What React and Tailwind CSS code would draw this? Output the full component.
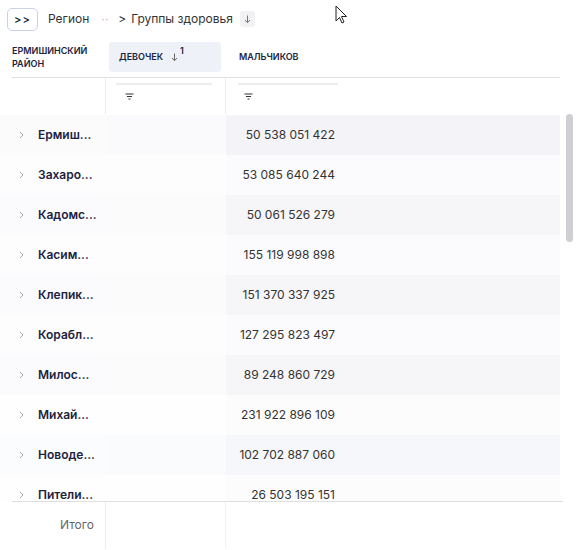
import React from "react";

const rows = [
  ["Ермиш...", "50 538 051 422", "bg-[#f4f4f8]"],
  ["Захаро...", "53 085 640 244", "bg-[#fbfbfd]"],
  ["Кадомс...", "50 061 526 279", "bg-[#f6f6f9]"],
  ["Касим...", "155 119 998 898", "bg-[#fbfbfd]"],
  ["Клепик...", "151 370 337 925", "bg-[#f6f6f9]"],
  ["Корабл...", "127 295 823 497", "bg-[#fbfbfd]"],
  ["Милос...", "89 248 860 729", "bg-[#f6f6f9]"],
  ["Михай...", "231 922 896 109", "bg-[#fcfcfd]"],
  ["Новоде...", "102 702 887 060", "bg-[#f5f7fa]"],
  ["Пители...", "26 503 195 151", "bg-[#fcfcfd]"],
];

function FilterIcon() {
  return (
    <svg width="9" height="7" viewBox="0 0 9 7" className="text-[#333]">
      <path d="M0.5 1h8M2 3.5h5M3.5 6h2" stroke="currentColor" strokeWidth="1.2" />
    </svg>
  );
}

export default function App() {
  return (
    <div
      className="relative w-[584px] h-[550px] bg-white overflow-hidden text-[#222]"
      style={{ fontFamily: "Inter, 'Noto Sans', sans-serif" }}
    >
      {/* top bar */}
      <div className="flex items-center h-[38px] pl-[7px]">
        <div className="w-[31px] h-[23px] border border-[#c9d3e6] rounded-[5px] flex items-center justify-center text-[11px] font-semibold text-[#1b2340] tracking-[1px]">
          &gt;&gt;
        </div>
        <span className="ml-[10px] text-[12px] text-[#333]">Регион</span>
        <span className="ml-[12px] text-[10px] text-[#aaa] tracking-[1px]">··</span>
        <span className="ml-[9px] text-[12px] text-[#333]">&gt;</span>
        <span className="ml-[5px] text-[12px] text-[#333]">Группы здоровья</span>
        <span className="ml-[7px] w-[15px] h-[16px] rounded-[3px] bg-[#f2f2f4] flex items-center justify-center">
          <svg width="7" height="9" viewBox="0 0 7 9">
            <path d="M3.5 0.5v7M1 5l2.5 2.7L6 5" stroke="#777" strokeWidth="1" fill="none" />
          </svg>
        </span>
      </div>

      {/* header */}
      <div className="flex h-[40px] ml-[12px] mr-[24px] border-b border-[#dedfe3]">
        <div className="w-[94px] pt-[6px] text-[9px] leading-[13px] font-semibold text-[#1b2340]">
          ЕРМИШИНСКИЙ
          <br />
          РАЙОН
        </div>
        <div className="w-[112px] ml-[3px] mb-[5px] mt-[4px] rounded-[3px] bg-[#eef1f7] flex items-center pl-[10px]">
          <span className="text-[9px] font-semibold text-[#1b2340]">ДЕВОЧЕК</span>
          <svg width="7" height="9" viewBox="0 0 7 9" className="ml-[8px] mt-[1px]">
            <path d="M3.5 0.5v7M1 5l2.5 2.7L6 5" stroke="#666" strokeWidth="1" fill="none" />
          </svg>
          <span className="ml-[2px] -mt-[12px] text-[9px] font-semibold text-[#1b2340]">1</span>
        </div>
        <div className="ml-[18px] flex items-center pb-[2px]">
          <span className="text-[9px] font-semibold text-[#1b2340]">МАЛЬЧИКОВ</span>
        </div>
      </div>

      {/* filter row */}
      <div className="flex h-[36px]">
        <div className="w-[106px] border-r border-[#ececef]"></div>
        <div className="w-[120px] border-r border-[#ececef] pt-[5px] pl-[10px]">
          <div className="w-[96px] h-[24px] border-t-[2px] border-[#ececf0] flex items-center pl-[9px]">
            <FilterIcon />
          </div>
        </div>
        <div className="w-[120px] pt-[5px] pl-[12px]">
          <div className="w-[100px] h-[24px] border-t-[2px] border-[#ececf0] flex items-center pl-[6px]">
            <FilterIcon />
          </div>
        </div>
      </div>

      {/* body */}
      <div className="relative h-[387px] overflow-hidden">
        <div className="flex flex-col mt-[1px]">
          {rows.map(([name, val, bg], i) => (
            <div key={i} className={`flex items-center h-[40px] mr-[24px] ${bg}`}>
              <div className="w-[106px] flex items-center bg-white/60 h-full">
                <svg width="5" height="8" viewBox="0 0 5 8" className="ml-[19px]">
                  <path d="M1 1l3 3-3 3" stroke="#aaa" strokeWidth="1" fill="none" />
                </svg>
                <span className="ml-[14px] text-[12px] font-semibold text-[#1b2340]">{name}</span>
              </div>
              <div className="w-[120px] h-full bg-white/50"></div>
              <div className="w-[109px] text-right text-[12px] text-[#333]">{val}</div>
            </div>
          ))}
        </div>
        <div className="absolute left-[566px] top-[0px] w-[7px] h-[128px] rounded-full bg-[#cfcfd3]"></div>
      </div>

      {/* footer */}
      <div className="flex h-[48px] ml-[12px] mr-[21px] border-t border-[#dedfe3]">
        <div className="w-[82px] text-right pt-[14px] text-[12px] text-[#666]">Итого</div>
        <div className="w-[12px] border-r border-[#ececef]"></div>
        <div className="w-[120px] border-r border-[#f2f2f4]"></div>
      </div>

      {/* cursor */}
      <svg className="absolute left-[335px] top-[5px]" width="13" height="19" viewBox="0 0 13 19">
        <path d="M1 1v15l3.5-3.5 2.5 5.5 2-1-2.5-5.5H11.5z" fill="#fff" stroke="#222" strokeWidth="1" strokeLinejoin="round" />
      </svg>
    </div>
  );
}
